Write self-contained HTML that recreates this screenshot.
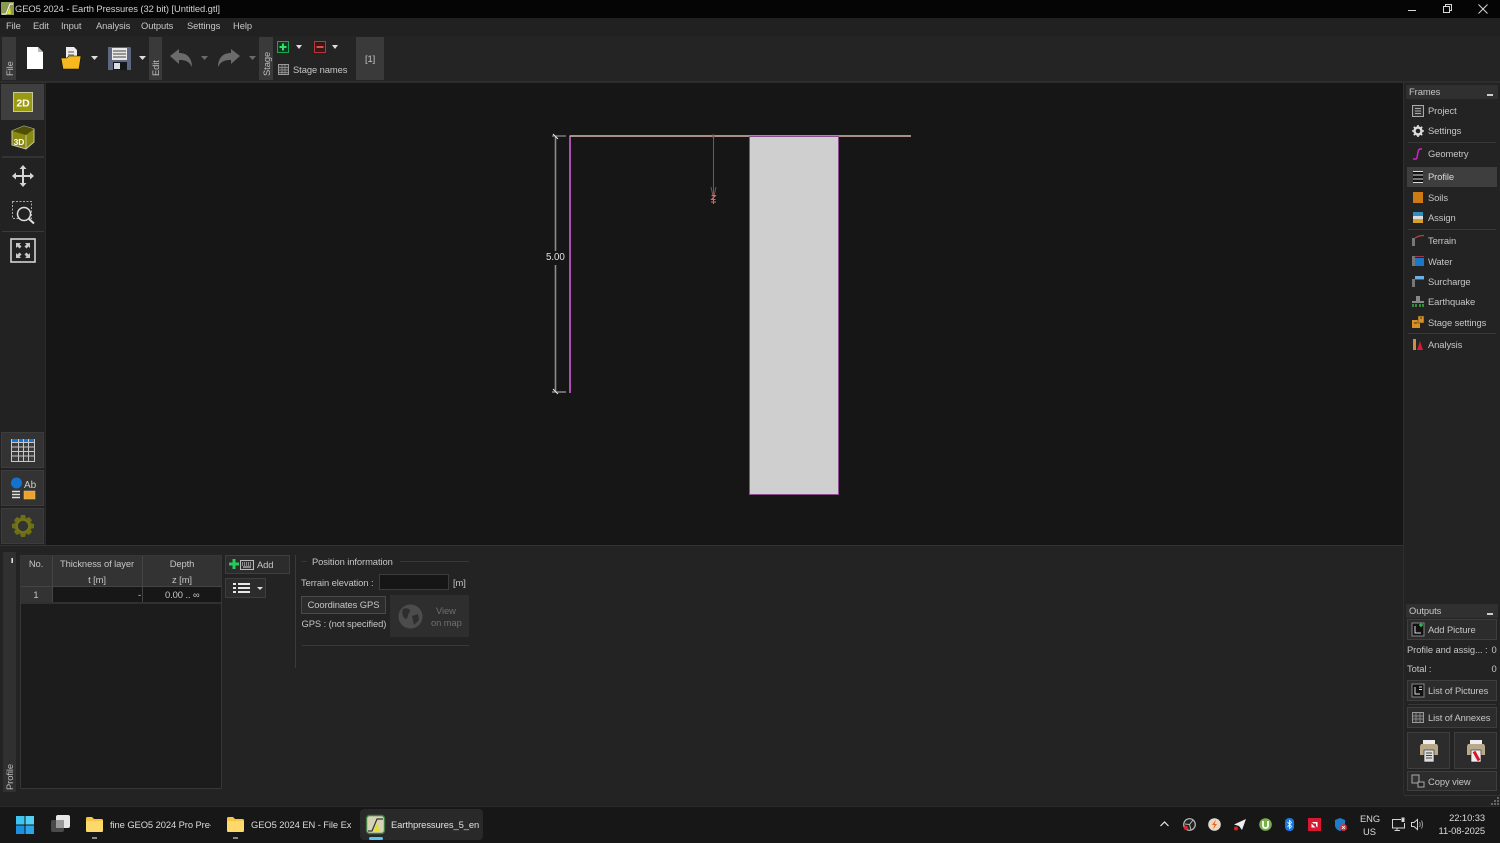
<!DOCTYPE html>
<html><head><meta charset="utf-8"><title>GEO5 2024 - Earth Pressures</title>
<style>
html,body{margin:0;padding:0;background:#222;}
#r{position:relative;width:1500px;height:843px;overflow:hidden;background:#232323;font-family:"Liberation Sans",sans-serif;font-size:9.4px;letter-spacing:-.08px;color:#c6c6c6;}
#r div,#r span.t{position:absolute;}
.t{white-space:nowrap;line-height:14px;margin-top:1px;}
.btn{background:#2c2c2c;border:1px solid #3e3e3e;box-sizing:border-box;}
.sep{background:#383838;height:1px;}
.side{background:#3a3a3a;}
.v{transform:rotate(-90deg);transform-origin:left top;white-space:nowrap;color:#bdbdbd;line-height:12px;}
svg{position:absolute;overflow:visible;}
</style></head><body><div id="r">

<!-- title bar -->
<div style="left:0;top:0;width:1500px;height:18px;background:#050505"></div>
<svg style="left:1px;top:2px" width="13" height="13" viewBox="0 0 13 13"><rect width="13" height="13" fill="#8a9a50"/><path d="M1 12 H5 L9 2 H12" stroke="#fff" fill="none"/><path d="M6 12 L9 5 L10 12Z" fill="#e6df20"/></svg>
<span class="t" style="left:15px;top:1px;color:#d0d0d0">GEO5 2024 - Earth Pressures (32 bit) [Untitled.gtl]</span>
<svg style="left:1400px;top:0" width="100" height="18" fill="none" stroke="#d8d8d8"><path d="M8 10.500H16"/><path d="M43.500 6.500H49.500V12.500H43.500Z M45.500 6.500V4.500H51.500V10.500H49.500"/><path d="M78.500 4.500L87.500 13.500M87.500 4.500L78.500 13.500"/></svg>

<!-- menu -->
<div style="left:0;top:18px;width:1500px;height:18px;background:#212121"></div>
<span class="t" style="left:6px;top:18px">File</span>
<span class="t" style="left:33px;top:18px">Edit</span>
<span class="t" style="left:61px;top:18px">Input</span>
<span class="t" style="left:96px;top:18px">Analysis</span>
<span class="t" style="left:141px;top:18px">Outputs</span>
<span class="t" style="left:187px;top:18px">Settings</span>
<span class="t" style="left:233px;top:18px">Help</span>

<!-- toolbar -->
<div style="left:0;top:36px;width:1500px;height:46px;background:#242424"></div>
<div style="left:0;top:81px;width:1500px;height:2px;background:#2d2d2d"></div>
<div class="side" style="left:2px;top:37px;width:14px;height:43px"></div>
<div class="v" style="left:4px;top:76px">File</div>
<div class="side" style="left:149px;top:37px;width:13px;height:43px"></div>
<div class="v" style="left:150px;top:76px">Edit</div>
<div class="side" style="left:259px;top:37px;width:14px;height:43px"></div>
<div class="v" style="left:261px;top:76px">Stage</div>

<svg style="left:26px;top:47px" width="18" height="23" viewBox="0 0 18 23"><path d="M1 0H12L17 5V22H1Z" fill="#fff"/><path d="M12 0V5H17" fill="#bbb"/></svg>
<svg style="left:60px;top:46px" width="22" height="24" viewBox="0 0 22 24"><path d="M6 1H14L17 4V14H6Z" fill="#eee"/><path d="M8 6H14M8 9H14" stroke="#555"/><path d="M1 12H7L9 10H21L19 23H3Z" fill="#f6b81d" stroke="#111" stroke-width=".6"/></svg>
<svg style="left:91px;top:56px" width="7" height="4"><path d="M0 0H7L3.500 4Z" fill="#ddd"/></svg>
<svg style="left:108px;top:47px" width="23" height="23" viewBox="0 0 23 23"><path d="M0 0H22L23 1V23H0Z" fill="#5d6782"/><rect x="4" y="1" width="15" height="12" fill="#e8e8e8"/><path d="M5 4H18M5 7H18M5 10H18" stroke="#444"/><rect x="5" y="15" width="14" height="8" fill="#15151c"/><rect x="6" y="16" width="6" height="6" fill="#ddd"/></svg>
<svg style="left:139px;top:56px" width="7" height="4"><path d="M0 0H7L3.500 4Z" fill="#ddd"/></svg>
<svg style="left:170px;top:49px" width="23" height="18" viewBox="0 0 23 18"><path d="M0 7L9 0V4C17 4 22 9 22 18C19 12 15 11 9 11V15Z" fill="#6b6b6b"/></svg>
<svg style="left:201px;top:56px" width="7" height="4"><path d="M0 0H7L3.500 4Z" fill="#6a6a6a"/></svg>
<svg style="left:218px;top:49px" width="23" height="18" viewBox="0 0 23 18"><path d="M22 7L13 0V4C5 4 0 9 0 18C3 12 7 11 13 11V15Z" fill="#6b6b6b"/></svg>
<svg style="left:249px;top:56px" width="7" height="4"><path d="M0 0H7L3.500 4Z" fill="#6a6a6a"/></svg>

<svg style="left:277px;top:41px" width="12" height="12"><rect x=".5" y=".5" width="11" height="11" fill="#12361f" stroke="#1aa552"/><path d="M6 2.500V9.500M2.500 6H9.500" stroke="#2fe06e" stroke-width="2"/></svg>
<svg style="left:296px;top:45px" width="6" height="4"><path d="M0 0H6L3 4Z" fill="#ddd"/></svg>
<svg style="left:314px;top:41px" width="12" height="12"><rect x=".5" y=".5" width="11" height="11" fill="#3a1717" stroke="#b33a3a"/><path d="M2.500 6H9.500" stroke="#e04a4a" stroke-width="2"/></svg>
<svg style="left:332px;top:45px" width="6" height="4"><path d="M0 0H6L3 4Z" fill="#ddd"/></svg>
<svg style="left:278px;top:64px" width="11" height="11"><rect x=".5" y=".5" width="10" height="10" fill="#3a3a3a" stroke="#9a9a9a"/><path d="M.5 3.500H10.500M.5 6H10.500M.5 8.500H10.500M4 .5V10.500M7 .5V10.500" stroke="#9a9a9a" stroke-width=".7"/></svg>
<span class="t" style="left:293px;top:62px">Stage names</span>
<div style="left:356px;top:37px;width:28px;height:43px;background:#3a3a3a"></div>
<span class="t" style="left:365px;top:51px">[1]</span>

<!-- canvas -->
<div style="left:46px;top:83px;width:1357px;height:463px;background:#161616"></div>

<!-- left bar -->
<div style="left:0;top:83px;width:46px;height:463px;background:#222"></div>
<div style="left:45px;top:83px;width:1px;height:463px;background:#2a2a2a"></div>
<div style="left:1px;top:84px;width:43px;height:36px;background:#3f3f3f"></div>
<svg style="left:13px;top:92px" width="20" height="20"><rect x=".5" y=".5" width="19" height="19" fill="#9a9a10" stroke="#c8c8a0"/><text x="10" y="14.500" text-anchor="middle" font-family="Liberation Sans" font-size="10.500" font-weight="bold" fill="#fff">2D</text></svg>
<svg style="left:11px;top:125px" width="24" height="25" viewBox="0 0 24 25"><path d="M1 6L13 1L23 4V17L15 24L1 20Z" fill="#8a8a10" stroke="#c7c7a0"/><path d="M1 6L15 10L23 4L13 1Z" fill="#4f4f08"/><path d="M15 10V24" stroke="#c7c7a0"/><text x="8" y="20" text-anchor="middle" font-family="Liberation Sans" font-size="8.500" font-weight="bold" fill="#fff">3D</text></svg>
<div class="sep" style="left:2px;top:156px;width:42px;height:2px;background:#333"></div>
<svg style="left:11px;top:164px" width="24" height="24" viewBox="0 0 24 24"><path d="M12 1L15.500 5H13V11H19V8.500L23 12L19 15.500V13H13V19H15.500L12 23L8.500 19H11V13H5V15.500L1 12L5 8.500V11H11V5H8.500Z" fill="#d4d4d4"/></svg>
<svg style="left:12px;top:201px" width="24" height="24" viewBox="0 0 24 24" fill="none"><rect x=".5" y=".5" width="19" height="17" stroke="#aaa" stroke-dasharray="2 1.500"/><circle cx="12" cy="13" r="6.500" fill="#222" stroke="#e0e0e0" stroke-width="1.500"/><path d="M17 18L22 22.500" stroke="#e0e0e0" stroke-width="2"/></svg>
<div class="sep" style="left:2px;top:231px;width:42px;background:#3a3a3a"></div>
<svg style="left:10px;top:238px" width="26" height="25" viewBox="0 0 26 25" fill="none"><rect x="1" y="1" width="24" height="23" stroke="#d4d4d4" stroke-width="1.600"/><g fill="#c8c8c8"><path d="M6 5L11 5 9.500 6.500 11.500 8.500 9.500 10.500 7.500 8.500 6 10Z"/><path d="M20 5L15 5 16.500 6.500 14.500 8.500 16.500 10.500 18.500 8.500 20 10Z"/><path d="M6 20L11 20 9.500 18.500 11.500 16.500 9.500 14.500 7.500 16.500 6 15Z"/><path d="M20 20L15 20 16.500 18.500 14.500 16.500 16.500 14.500 18.500 16.500 20 15Z"/></g></svg>

<div style="left:1px;top:432px;width:43px;height:36px;background:#333;border:1px solid #3c3c3c;box-sizing:border-box"></div>
<svg style="left:11px;top:439px" width="24" height="23" viewBox="0 0 24 23"><rect width="24" height="23" fill="#3c3c3c"/><rect x="0" y="0" width="24" height="3.500" fill="#1476d0"/><path d="M0 3.500H24M0 8H24M0 12.500H24M0 17H24M0 22.500H24" stroke="#c8c8c8"/><path d="M.5 0V23M7.500 0V23M12.500 0V23M17.500 0V23M23.500 0V23" stroke="#c8c8c8"/></svg>
<div style="left:1px;top:470px;width:43px;height:36px;background:#333;border:1px solid #3c3c3c;box-sizing:border-box"></div>
<svg style="left:11px;top:477px" width="25" height="23"><circle cx="5.500" cy="6" r="5.500" fill="#1272cc"/><text x="13" y="11" font-family="Liberation Sans" font-size="10" fill="#ccc">Ab</text><path d="M1 14.500H9M1 17.500H9M1 20.500H9" stroke="#e0e0e0" stroke-width="1.500"/><rect x="13" y="14" width="11" height="8" fill="#eba22f" stroke="#e7c580" stroke-width=".5"/></svg>
<div style="left:1px;top:508px;width:43px;height:36px;background:#333;border:1px solid #3c3c3c;box-sizing:border-box"></div>
<svg style="left:11px;top:514px" width="24" height="24" viewBox="0 0 24 24"><path d="M10 1H14L15 4.500L18 3L21 6L19.500 9L23 10V14L19.500 15L21 18L18 21L15 19.500L14 23H10L9 19.500L6 21L3 18L4.500 15L1 14V10L4.500 9L3 6L6 3L9 4.500Z" fill="#6e6e14"/><circle cx="12" cy="12" r="6" fill="#333"/><circle cx="12" cy="12" r="6" fill="none" stroke="#77771a" stroke-width="1.600"/></svg>

<!-- drawing -->
<svg style="left:0;top:0" width="1500" height="843">
<path d="M555.500 137V391" stroke="#8c8c8c" stroke-width="1.600"/>
<path d="M552 136H566" stroke="#aaa" stroke-width="1"/>
<path d="M552 392H566" stroke="#999" stroke-width="1.300"/>
<path d="M553 134L558 139M553 389L558 394" stroke="#e8e8e8" stroke-width="1"/>
<path d="M570 135.500V393" stroke="#ad4fb0" stroke-width="2"/>
<path d="M570 136H911" stroke="#d8baa8" stroke-width="1.600"/>
<rect x="749.500" y="136.500" width="89" height="358" fill="#cfcfcf" stroke="#8a4f8c"/>
<path d="M713.500 136V199" stroke="#7a5555"/>
<path d="M711 187L713.500 198L716 187" stroke="#7a5555" fill="none"/>
<circle cx="713.500" cy="136" r="1.500" fill="#a06a60"/>
<path d="M711.500 195.500H715.500L711.500 199.500H715.500M711 202H716M713.500 200V204" stroke="#d86a6a" fill="none"/>
</svg>
<span class="t" style="left:546px;top:250px;background:#161616;color:#e0e0e0;font-size:9.8px">5.00</span>

<!-- bottom panel -->
<div style="left:0;top:546px;width:1403px;height:260px;background:#232323"></div>
<div style="left:0;top:545px;width:1403px;height:1px;background:#333"></div>
<div class="side" style="left:3px;top:552px;width:13px;height:240px;background:#303030"></div>
<div style="left:12px;top:558px;width:1px;height:5px;background:#ddd;box-shadow:-1px 0 0 #999"></div>
<div class="v" style="left:4px;top:790px">Profile</div>

<!-- table -->
<div style="left:20px;top:555px;width:202px;height:234px;background:#1c1c1c;border:1px solid #363636;box-sizing:border-box"></div>
<div style="left:21px;top:556px;width:200px;height:31px;background:#333"></div>
<div style="left:21px;top:587px;width:31px;height:15px;background:#333"></div>
<div style="left:52px;top:587px;width:169px;height:15px;background:#171717"></div>
<div style="left:21px;top:602px;width:200px;height:2px;background:#303030"></div>
<div style="left:52px;top:556px;width:1px;height:46px;background:#444"></div>
<div style="left:142px;top:556px;width:1px;height:46px;background:#444"></div>
<div style="left:21px;top:586px;width:200px;height:1px;background:#444"></div>
<span class="t" style="left:20px;top:556px;width:32px;text-align:center">No.</span>
<span class="t" style="left:52px;top:556px;width:90px;text-align:center">Thickness of layer</span>
<span class="t" style="left:142px;top:556px;width:80px;text-align:center">Depth</span>
<span class="t" style="left:52px;top:572px;width:90px;text-align:center">t [m]</span>
<span class="t" style="left:142px;top:572px;width:80px;text-align:center">z [m]</span>
<span class="t" style="left:20px;top:587px;width:32px;text-align:center">1</span>
<span class="t" style="left:138px;top:587px">-</span>
<span class="t" style="left:165px;top:587px">0.00 .. ∞</span>

<div class="btn" style="left:225px;top:555px;width:65px;height:19px"></div>
<svg style="left:229px;top:559px" width="10" height="10"><path d="M5 0V10M0 5H10" stroke="#26c95a" stroke-width="3"/></svg>
<svg style="left:240px;top:558px" width="15" height="13"><rect x=".5" y="2.500" width="13" height="9" fill="#333" stroke="#bbb"/><path d="M2 5H12M2 7H12" stroke="#ddd" stroke-dasharray="1 1"/><path d="M3 9H11" stroke="#ddd"/></svg>
<span class="t" style="left:257px;top:557px">Add</span>
<div class="btn" style="left:225px;top:578px;width:41px;height:20px"></div>
<svg style="left:233px;top:583px" width="17" height="10"><path d="M0 1H3M5 1H17M0 5H3M5 5H17M0 9H3M5 9H17" stroke="#e8e8e8" stroke-width="2"/></svg>
<svg style="left:257px;top:587px" width="6" height="3"><path d="M0 0H6L3 3Z" fill="#ddd"/></svg>
<div style="left:295px;top:555px;width:1px;height:113px;background:#3a3a3a"></div>

<div class="sep" style="left:302px;top:561px;width:5px"></div>
<span class="t" style="left:312px;top:554px">Position information</span>
<div class="sep" style="left:400px;top:561px;width:69px"></div>
<span class="t" style="left:301px;top:575px">Terrain elevation :</span>
<div style="left:379px;top:574px;width:70px;height:16px;background:#161616;border:1px solid #3c3c3c;box-sizing:border-box"></div>
<span class="t" style="left:453px;top:575px">[m]</span>
<div class="btn" style="left:301px;top:596px;width:85px;height:18px;border-color:#4a4a4a"></div>
<span class="t" style="left:301px;top:597px;width:85px;text-align:center">Coordinates GPS</span>
<span class="t" style="left:301.500px;top:616px">GPS : (not specified)</span>
<div style="left:390px;top:595px;width:79px;height:42px;background:#2e2e2e"></div>
<svg style="left:398px;top:604px" width="25" height="25"><circle cx="12.500" cy="12.500" r="12" fill="#4c4c4c"/><path d="M5 5C9 3 13 5 12 8C9 10 11 13 8 15C5 14 3 9 5 5ZM14 12L20 10L21 16L16 21Z" fill="#2e2e2e"/></svg>
<span class="t" style="left:436px;top:603px;color:#6e6e6e">View</span>
<span class="t" style="left:431px;top:615px;color:#6e6e6e">on map</span>
<div class="sep" style="left:302px;top:645px;width:167px"></div>

<!-- right panel -->
<div style="left:1403px;top:83px;width:97px;height:723px;background:#232323"></div>
<div style="left:1403px;top:83px;width:1px;height:712px;background:#2e2e2e"></div>
<div style="left:1406px;top:85px;width:92px;height:14px;background:#303030"></div>
<span class="t" style="left:1409px;top:84px">Frames</span>
<div style="left:1487px;top:94px;width:6px;height:2px;background:#ccc"></div>

<svg style="left:1412px;top:105px" width="12" height="12"><rect x=".5" y=".5" width="11" height="11" fill="#333" stroke="#aaa"/><path d="M3 3.500H9M3 6H9M3 8.500H9" stroke="#aaa"/></svg>
<span class="t" style="left:1428px;top:103px">Project</span>
<svg style="left:1412px;top:125px" width="12" height="12" viewBox="0 0 12 12"><circle cx="6" cy="6" r="3.500" fill="none" stroke="#ddd" stroke-width="2.400"/><path d="M6 0V12M0 6H12M1.800 1.800L10.200 10.200M10.200 1.800L1.800 10.200" stroke="#ddd" stroke-width="1.600" stroke-dasharray="2 8"/></svg>
<span class="t" style="left:1428px;top:123px">Settings</span>
<div class="sep" style="left:1408px;top:142px;width:88px"></div>
<svg style="left:1412px;top:148px" width="12" height="12"><path d="M1 11H4C6 11 5 1 8 1H10" fill="none" stroke="#d81fd0" stroke-width="1.500"/></svg>
<span class="t" style="left:1428px;top:146px">Geometry</span>
<div style="left:1407px;top:167px;width:90px;height:20px;background:#3e3e3e"></div>
<svg style="left:1413px;top:171px" width="10" height="12"><rect width="10" height="12" fill="#111"/><path d="M0 .5H10M0 4H10M0 8H10M0 11.500H10" stroke="#ddd" stroke-width="1"/></svg>
<span class="t" style="left:1428px;top:169px;color:#d8d8d8">Profile</span>
<svg style="left:1413px;top:192px" width="10" height="11"><rect width="10" height="11" fill="#cd7a12"/></svg>
<span class="t" style="left:1428px;top:190px">Soils</span>
<svg style="left:1413px;top:212px" width="10" height="11"><rect width="10" height="11" fill="#d7a02a"/><rect width="10" height="4" fill="#2f8fc0"/><rect y="4" width="10" height="3" fill="#ddd"/></svg>
<span class="t" style="left:1428px;top:210px">Assign</span>
<div class="sep" style="left:1408px;top:229px;width:88px"></div>

<svg style="left:1412px;top:235px" width="12" height="11"><rect y="3" width="3" height="8" fill="#777"/><path d="M3 3C6 1 9 .5 12 .5" stroke="#b8404a" fill="none" stroke-width="1.200"/></svg>
<span class="t" style="left:1428px;top:233px">Terrain</span>
<svg style="left:1412px;top:256px" width="12" height="10"><rect y="0" width="3" height="10" fill="#777"/><rect x="3" y="2" width="9" height="8" fill="#1a78c8"/><path d="M3 .5H12" stroke="#a03a40"/></svg>
<span class="t" style="left:1428px;top:254px">Water</span>
<svg style="left:1412px;top:276px" width="12" height="11"><rect y="3" width="3" height="8" fill="#777"/><rect x="3" y="0" width="9" height="3" fill="#6ab0e6"/><path d="M3 3.500H12" stroke="#a03a40"/></svg>
<span class="t" style="left:1428px;top:274px">Surcharge</span>
<svg style="left:1412px;top:296px" width="12" height="11"><rect x="4" y="0" width="4" height="7" fill="#888"/><path d="M0 6H12" stroke="#888" stroke-width="2"/><path d="M1 8V11M4 8V11M8 8V11M11 8V11" stroke="#3fae4a" stroke-width="1.500"/></svg>
<span class="t" style="left:1428px;top:294px">Earthquake</span>
<svg style="left:1412px;top:316px" width="12" height="12"><rect y="4" width="8" height="8" fill="#d89020"/><rect x="6" width="6" height="7" fill="#d89020" stroke="#333" stroke-width=".5"/><path d="M2 7H5M8 2H10" stroke="#333"/></svg>
<span class="t" style="left:1428px;top:315px">Stage settings</span>
<div class="sep" style="left:1408px;top:333px;width:88px"></div>
<svg style="left:1413px;top:339px" width="11" height="11"><rect width="3" height="11" fill="#c89040"/><path d="M4 11L7 2L10 11Z" fill="#d8183a"/></svg>
<span class="t" style="left:1428px;top:337px">Analysis</span>

<div style="left:1406px;top:604px;width:92px;height:14px;background:#303030"></div>
<span class="t" style="left:1409px;top:603px">Outputs</span>
<div style="left:1487px;top:613px;width:6px;height:2px;background:#ccc"></div>

<div class="btn" style="left:1407px;top:619px;width:90px;height:21px"></div>
<svg style="left:1412px;top:623px" width="12" height="13"><rect width="12" height="13" fill="#111" stroke="#888"/><path d="M3 3V10H9" stroke="#ddd" fill="none"/><path d="M9 0V4M7 2H11" stroke="#2ed060" stroke-width="1.300"/></svg>
<span class="t" style="left:1428px;top:622px">Add Picture</span>
<span class="t" style="left:1407px;top:642px">Profile and assig... :</span>
<span class="t" style="left:1491.500px;top:642px">0</span>
<span class="t" style="left:1407px;top:661px">Total :</span>
<span class="t" style="left:1491.500px;top:661px">0</span>
<div class="btn" style="left:1407px;top:680px;width:90px;height:21px"></div>
<svg style="left:1412px;top:684px" width="12" height="13"><rect width="12" height="13" fill="#111" stroke="#888"/><path d="M3 3V10H8M7 3H10M7 5.500H10" stroke="#ddd" fill="none"/></svg>
<span class="t" style="left:1428px;top:683px">List of Pictures</span>
<div class="sep" style="left:1408px;top:704px;width:88px"></div>
<div class="btn" style="left:1407px;top:707px;width:90px;height:21px"></div>
<svg style="left:1412px;top:712px" width="12" height="11"><rect x=".5" y=".5" width="11" height="10" fill="#3a3a3a" stroke="#999"/><path d="M.5 4H11.500M.5 7H11.500M4 .5V10.500M8 .5V10.500" stroke="#999" stroke-width=".7"/></svg>
<span class="t" style="left:1428px;top:710px">List of Annexes</span>

<div class="btn" style="left:1407px;top:732px;width:43px;height:37px"></div>
<svg style="left:1420px;top:740px" width="18" height="22" viewBox="0 0 18 22"><rect x="3" y="0" width="12" height="5" fill="#eee"/><path d="M1 4H17L18 6V15H14V11H4V15H0V6Z" fill="#b9a98a"/><rect x="4" y="10" width="10" height="12" fill="#dcdcdc" stroke="#222" stroke-width=".6"/><path d="M6 13H12M6 15.500H12M6 18H12" stroke="#444"/></svg>
<div class="btn" style="left:1454px;top:732px;width:43px;height:37px"></div>
<svg style="left:1467px;top:740px" width="18" height="22" viewBox="0 0 18 22"><rect x="3" y="0" width="12" height="5" fill="#eee"/><path d="M1 4H17L18 6V15H14V11H4V15H0V6Z" fill="#b9a98a"/><rect x="4" y="10" width="10" height="12" fill="#eee" stroke="#222" stroke-width=".6"/><path d="M7 11.500L12 20.500" stroke="#d8182a" stroke-width="3"/></svg>
<div class="btn" style="left:1407px;top:771px;width:90px;height:20px"></div>
<svg style="left:1412px;top:775px" width="13" height="13"><rect x="0" y="0" width="7" height="8" fill="#333" stroke="#aaa"/><rect x="6" y="7" width="6" height="5" fill="#222" stroke="#aaa"/></svg>
<span class="t" style="left:1428px;top:774px">Copy view</span>
<div style="left:1404px;top:795px;width:96px;height:1px;background:#333"></div>
<svg style="left:1491px;top:797px" width="9" height="8" fill="#666"><path d="M6 0h2v2H6zM3 3h2v2H3zM6 3h2v2H6zM0 6h2v2H0zM3 6h2v2H3zM6 6h2v2H6z"/></svg>

<!-- taskbar -->
<div style="left:0;top:806px;width:1500px;height:37px;background:#171717;border-top:1px solid #2b2b2b;box-sizing:border-box"></div>
<svg style="left:16px;top:816px" width="18" height="18"><rect width="8.500" height="8.500" fill="#3dc4f0"/><rect x="9.500" width="8.500" height="8.500" fill="#55d0f5"/><rect y="9.500" width="8.500" height="8.500" fill="#1a90e0"/><rect x="9.500" y="9.500" width="8.500" height="8.500" fill="#2aa5ea"/></svg>
<svg style="left:51px;top:815px" width="19" height="18"><rect x="0" y="5" width="13" height="12" rx="2" fill="#4a4a4a"/><rect x="5" y="0" width="14" height="13" rx="2" fill="#e8e8e8"/><rect x="5" y="5" width="8" height="8" fill="#9a9a9a"/></svg>
<svg style="left:86px;top:817px" width="17" height="15"><path d="M0 1.500Q0 0 1.500 0H6L8 2H15.500Q17 2 17 3.500V13.500Q17 15 15.500 15H1.500Q0 15 0 13.500Z" fill="#f6c544"/><path d="M0 4H17V13.500Q17 15 15.500 15H1.500Q0 15 0 13.500Z" fill="#fcd96a"/></svg>
<span class="t" style="left:110px;top:817px;width:101px;overflow:hidden;color:#dcdcdc">fine GEO5 2024 Pro Pre-</span>
<div style="left:92px;top:837px;width:5px;height:2px;background:#888"></div>
<svg style="left:227px;top:817px" width="17" height="15"><path d="M0 1.500Q0 0 1.500 0H6L8 2H15.500Q17 2 17 3.500V13.500Q17 15 15.500 15H1.500Q0 15 0 13.500Z" fill="#f6c544"/><path d="M0 4H17V13.500Q17 15 15.500 15H1.500Q0 15 0 13.500Z" fill="#fcd96a"/></svg>
<span class="t" style="left:251px;top:817px;width:100px;overflow:hidden;color:#dcdcdc">GEO5 2024 EN - File Exp</span>
<div style="left:233px;top:837px;width:5px;height:2px;background:#888"></div>
<div style="left:360px;top:809px;width:123px;height:31px;background:#292929;border-radius:4px"></div>
<svg style="left:366px;top:815px" width="19" height="19"><rect x=".5" y=".5" width="18" height="18" rx="3" fill="#d4d4b4" stroke="#3f7a3f" stroke-width="1.400"/><path d="M2 16H6L11 4H17" stroke="#333" fill="none" stroke-width="1.200"/><path d="M8 16L11.500 7L13 16Z" fill="#e8e020"/></svg>
<span class="t" style="left:391px;top:817px;color:#e0e0e0">Earthpressures_5_en</span>
<div style="left:369px;top:837px;width:14px;height:3px;border-radius:2px;background:#58c4f2"></div>

<svg style="left:1160px;top:821px" width="9" height="6"><path d="M.5 5L4.500 1L8.500 5" stroke="#e8e8e8" fill="none" stroke-width="1.200"/></svg>
<svg style="left:1183px;top:818px" width="13" height="13"><circle cx="6.500" cy="6.500" r="5.800" fill="#222" stroke="#bbb" stroke-width="1.200"/><path d="M6.500 6.500L10 2M6.500 6.500L2 6M6.500 6.500L8 12" stroke="#bbb"/><circle cx="3" cy="10" r="2.200" fill="#e01f2b"/></svg>
<svg style="left:1208px;top:818px" width="13" height="13"><circle cx="6.500" cy="6.500" r="6.300" fill="#e8d8c8"/><path d="M8 1.500L4 7H6.500L5 11.500L9 6H6.500Z" fill="#e8641a"/></svg>
<svg style="left:1233px;top:818px" width="13" height="13"><path d="M13 1L1 6.500L6 8L9 12Z" fill="#eee"/><circle cx="3" cy="10.500" r="2" fill="#d82020"/></svg>
<svg style="left:1259px;top:818px" width="13" height="13"><circle cx="6.500" cy="6.500" r="6.300" fill="#78b04a"/><path d="M4 3V7.500Q4 10 6.500 10Q9 10 9 7.500V3" stroke="#fff" stroke-width="1.800" fill="none"/></svg>
<svg style="left:1285px;top:818px" width="9" height="13"><rect width="9" height="13" rx="4" fill="#1a78e0"/><path d="M2.500 4L6.500 8.500L4.500 10.500V2.500L6.500 4.500L2.500 9" stroke="#fff" fill="none" stroke-width=".8"/></svg>
<svg style="left:1308px;top:818px" width="13" height="13"><rect width="13" height="13" fill="#d81830"/><path d="M4 4H9.500V9.500L8 8V5.500H5.500ZM3.500 5.500V9.500H7.500Z" fill="#fff"/></svg>
<svg style="left:1334px;top:818px" width="13" height="13"><path d="M1 2L6 0L11 2V7C11 10 8 12 6 13C3 12 1 10 1 7Z" fill="#1e7cc8"/><circle cx="9.500" cy="9.500" r="3.500" fill="#e22a3a"/><path d="M8 8L11 11M11 8L8 11" stroke="#fff" stroke-width=".8"/></svg>
<span class="t" style="left:1360px;top:811px;color:#dadada">ENG</span>
<span class="t" style="left:1363px;top:824px;color:#dadada">US</span>
<svg style="left:1392px;top:817px" width="13" height="14" fill="none" stroke="#d4d4d4"><path d="M9 2.500H.5V11H12.500V6M5 11V13.500M2.500 13.500H8"/><rect x="9.500" y=".5" width="3" height="4.500" fill="#d4d4d4" stroke="none"/></svg>
<svg style="left:1411px;top:819px" width="12" height="11" fill="none" stroke="#d4d4d4"><path d="M.5 3.500H3L6.500 .5V10.500L3 7.500H.5Z"/><path d="M8.500 3Q10 5.500 8.500 8M10.500 1.500Q12.500 5.500 10.500 9.500" stroke="#999"/></svg>
<span class="t" style="left:1420px;top:810px;width:65px;text-align:right;color:#dadada">22:10:33</span>
<span class="t" style="left:1420px;top:823px;width:65px;text-align:right;color:#dadada">11-08-2025</span>
</div></body></html>
